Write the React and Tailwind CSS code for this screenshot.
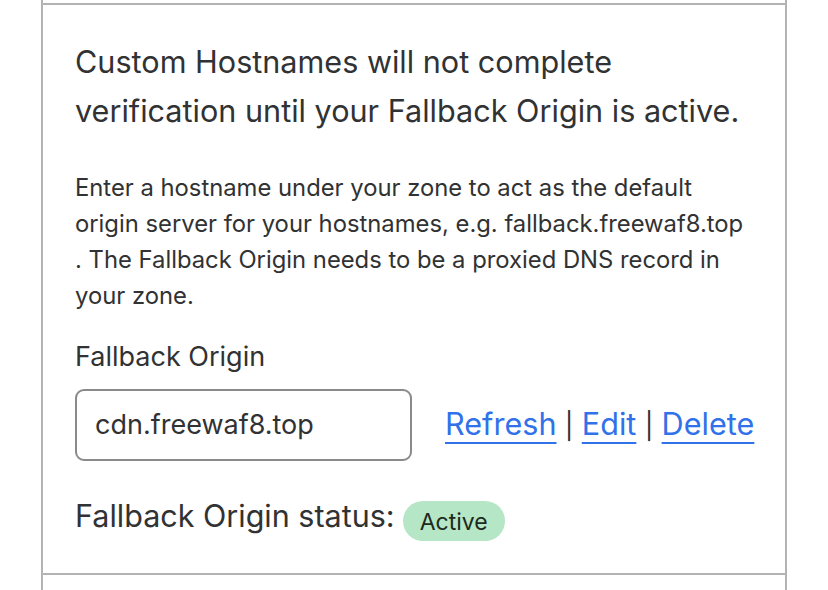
export default function App() {
  return (
    <div className="min-h-[590px] bg-white font-['Inter',sans-serif] text-[#313233]">
      <div className="ml-[41px] w-[746px] h-[590px] border-x-2 border-[#b3b3b3] pt-[3px]">
        <div className="border-y-2 border-[#b3b3b3] pl-[32px] pr-[16px] pt-[32px] h-[572px]">
          <h2 className="text-[30.6px] leading-[49px] font-normal">
            Custom Hostnames will not complete
            <br />
            verification until your Fallback Origin is active.
          </h2>
          <p className="mt-[35px] text-[23.8px] leading-[36px]">
            Enter a hostname under your zone to act as the default
            <br />
            origin server for your hostnames, e.g. fallback.freewaf8.top
            <br />
            . The Fallback Origin needs to be a proxied DNS record in
            <br />
            your zone.
          </p>
          <div className="mt-[25px] text-[27px] leading-[36px]">Fallback Origin</div>
          <div className="mt-[14px] flex items-center">
            <div className="w-[337px] h-[72px] rounded-[9px] border-2 border-[#8a8a8a] flex items-center pl-[18px] text-[27px]">
              cdn.freewaf8.top
            </div>
            <div className="ml-[33px] text-[30.6px] leading-[40px] whitespace-pre">
              <a href="#" className="text-[#3171ea] underline underline-offset-[7px] decoration-2">Refresh</a>
              <span className="text-[26px] px-[1px]"> | </span>
              <a href="#" className="text-[#3171ea] underline underline-offset-[7px] decoration-2">Edit</a>
              <span className="text-[26px] px-[1px]"> | </span>
              <a href="#" className="text-[#3171ea] underline underline-offset-[7px] decoration-2">Delete</a>
            </div>
          </div>
          <div className="mt-[35px] flex items-start text-[30.5px] leading-[40px]">
            <span>Fallback Origin status:</span>
            <span className="ml-[8px] mt-[5px] h-[40px] px-[17px] pt-[1px] rounded-full bg-[#b5e6c5] text-[#1c2a20] text-[23px] flex items-center">
              Active
            </span>
          </div>
        </div>
      </div>
    </div>
  );
}
